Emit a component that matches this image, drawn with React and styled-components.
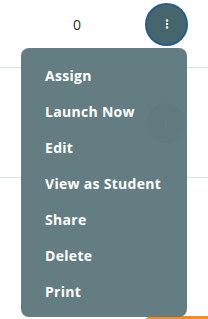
import React from 'react'
import styled, { createGlobalStyle } from 'styled-components'

const GlobalStyle = createGlobalStyle`
  html, body {
    margin: 0;
    padding: 0;
    background: #ffffff;
    overflow: hidden;
  }
  body {
    font-family: "Open Sans", Lato, sans-serif;
  }
`

const Page = styled.div`
  position: relative;
  width: 208px;
  height: 319px;
  overflow: hidden;
`

const Row = styled.div`
  display: grid;
  grid-template-columns: 1fr 62px;
  align-items: center;
  height: ${({ tall }) => (tall ? '110px' : '68px')};
  padding-bottom: ${({ tall }) => (tall ? '0' : '19px')};
  box-sizing: border-box;
  border-bottom: 1px solid #d6e4e7;
`

const LastRow = styled.div`
  display: flex;
  justify-content: flex-end;
  padding-top: 138px;
`

const Count = styled.span`
  justify-self: center;
  margin-left: 8px;
  font-size: 14px;
  color: #2b2b2b;
`

const KebabButton = styled.button`
  grid-column: 2;
  justify-self: end;
  width: ${({ active }) => (active ? '43px' : '40px')};
  height: ${({ active }) => (active ? '43px' : '40px')};
  margin-right: ${({ active }) => (active ? '20px' : '22px')};
  border-radius: 50%;
  border: 2px solid ${({ active }) => (active ? '#2b5b89' : '#46666e')};
  background: #46666e;
  display: flex;
  align-items: center;
  justify-content: center;
  padding: 0;
  box-sizing: border-box;
`

const OrangeButton = styled.div`
  width: 63px;
  height: 30px;
  background: #f68b1f;
  border-radius: 6px 0 0 0;
`

const Menu = styled.ul`
  position: absolute;
  left: 21px;
  top: 48px;
  width: 166px;
  margin: 0;
  padding: 9px 0 8px;
  list-style: none;
  background: rgba(97, 122, 129, 0.98);
  border-radius: 8px;
  box-sizing: border-box;
`

const MenuItem = styled.li`
  height: 36px;
  display: flex;
  align-items: center;
  padding-left: 24px;
  font-size: 14px;
  font-weight: 700;
  letter-spacing: 0.3px;
  color: #ffffff;
`

const Dots = () => (
  <svg width="4" height="10" viewBox="0 0 4 10">
    <circle cx="2" cy="1.5" r="1.2" fill="#fff" />
    <circle cx="2" cy="5" r="1.2" fill="#fff" />
    <circle cx="2" cy="8.5" r="1.2" fill="#fff" />
  </svg>
)

const items = ['Assign', 'Launch Now', 'Edit', 'View as Student', 'Share', 'Delete', 'Print']

export default function App() {
  return (
    <Page>
      <GlobalStyle />
      <Row>
        <Count>0</Count>
        <KebabButton active><Dots /></KebabButton>
      </Row>
      <Row tall>
        <KebabButton><Dots /></KebabButton>
      </Row>
      <LastRow>
        <OrangeButton />
      </LastRow>
      <Menu>
        {items.map((item) => (
          <MenuItem key={item}>{item}</MenuItem>
        ))}
      </Menu>
    </Page>
  )
}
